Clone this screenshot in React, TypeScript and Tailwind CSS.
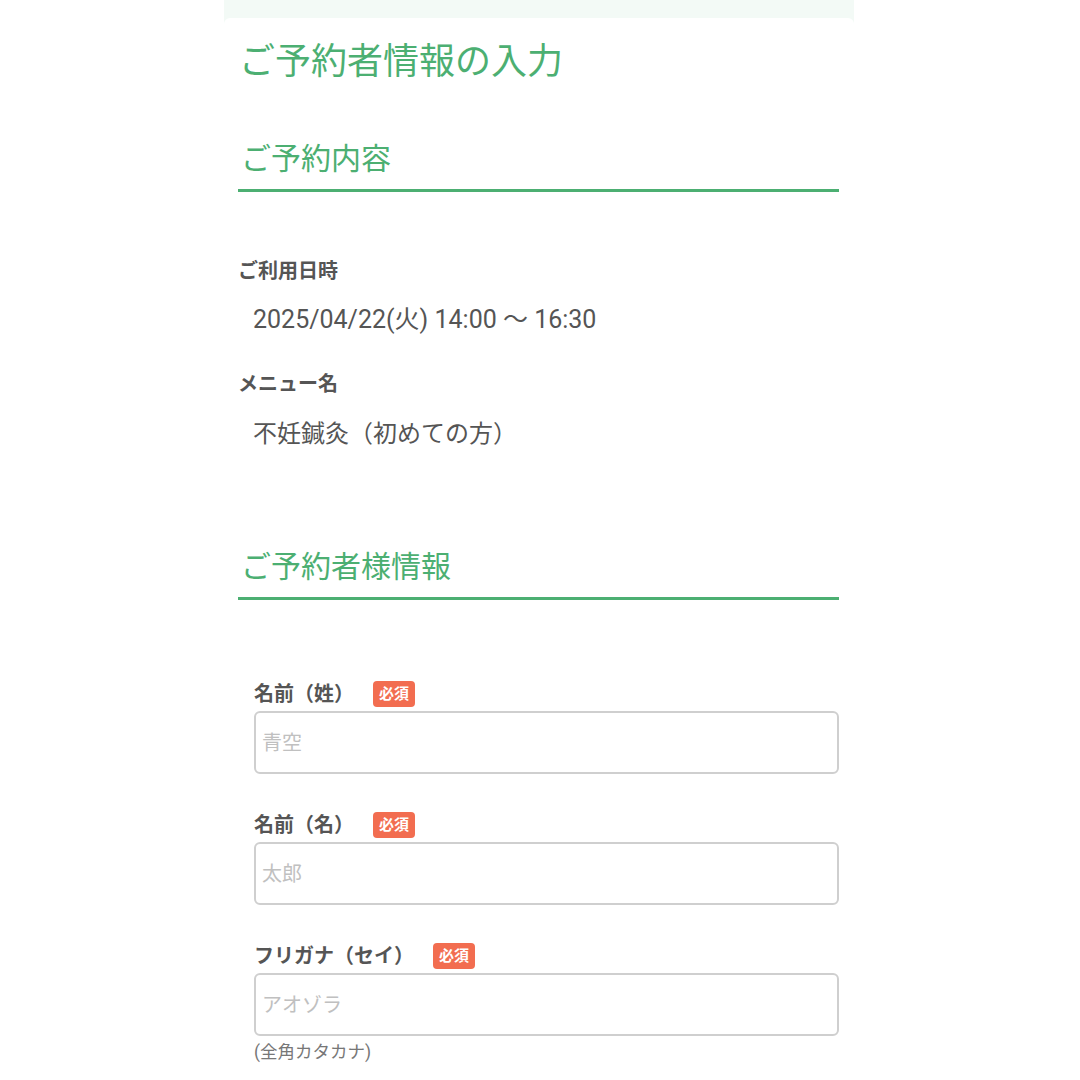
const green = "text-[#4caf72]"

function SectionHeading({ children }: { children: string }) {
  return (
    <h2 className={`${green} text-[30px] leading-[40px] pl-[3px] pb-[10px] border-b-[3px] border-[#4caf72]`}>
      {children}
    </h2>
  )
}

function Field({ label, placeholder, hint }: { label: string; placeholder: string; hint?: string }) {
  return (
    <div>
      <div className="flex items-center h-[26px]">
        <span className="text-[20px] font-bold text-[#555]">{label}</span>
        <span className="ml-[19px] h-[26px] px-[6px] rounded-[4px] bg-[#f26d50] text-white text-[15px] font-bold leading-[26px]">
          必須
        </span>
      </div>
      <input
        placeholder={placeholder}
        className="mt-[4px] w-full h-[63px] px-[6px] border-2 border-[#cfcfcf] rounded-[6px] text-[20px] text-[#555] placeholder:text-[#c0c0c0] outline-none"
      />
      {hint && <p className="mt-[6px] text-[17.5px] leading-[20px] text-[#777]">{hint}</p>}
    </div>
  )
}

export default function App() {
  return (
    <div className="min-h-screen bg-white flex justify-center" style={{ fontFamily: '"Roboto", "Noto Sans CJK JP", sans-serif' }}>
      <div className="w-[630px] -translate-x-[1px] bg-[#f3faf6] pt-[18px]">
        <div className="bg-white rounded-t-[6px] pl-[14px] pr-[15px] pt-[20px] pb-[40px]">
          <h1 className={`${green} text-[36px] leading-[48px] pl-[1px]`}>ご予約者情報の入力</h1>

          <div className="mt-[53px]">
            <SectionHeading>ご予約内容</SectionHeading>
          </div>

          <div className="mt-[66px]">
            <p className="text-[20px] leading-[26px] font-bold text-[#555]">ご利用日時</p>
            <p className="mt-[22px] pl-[15px] text-[25px] leading-[28px] text-[#555]">2025/04/22(火) 14:00 〜 16:30</p>
            <p className="mt-[37px] text-[20px] leading-[26px] font-bold text-[#555]">メニュー名</p>
            <p className="mt-[23px] pl-[15px] text-[24px] leading-[28px] text-[#555]">不妊鍼灸（初めての方）</p>
          </div>

          <div className="mt-[99px]">
            <SectionHeading>ご予約者様情報</SectionHeading>
          </div>

          <div className="mt-[81px] pl-[16px] flex flex-col gap-[38px]">
            <Field label="名前（姓）" placeholder="青空" />
            <Field label="名前（名）" placeholder="太郎" />
            <Field label="フリガナ（セイ）" placeholder="アオゾラ" hint="(全角カタカナ)" />
          </div>
        </div>
      </div>
    </div>
  )
}
